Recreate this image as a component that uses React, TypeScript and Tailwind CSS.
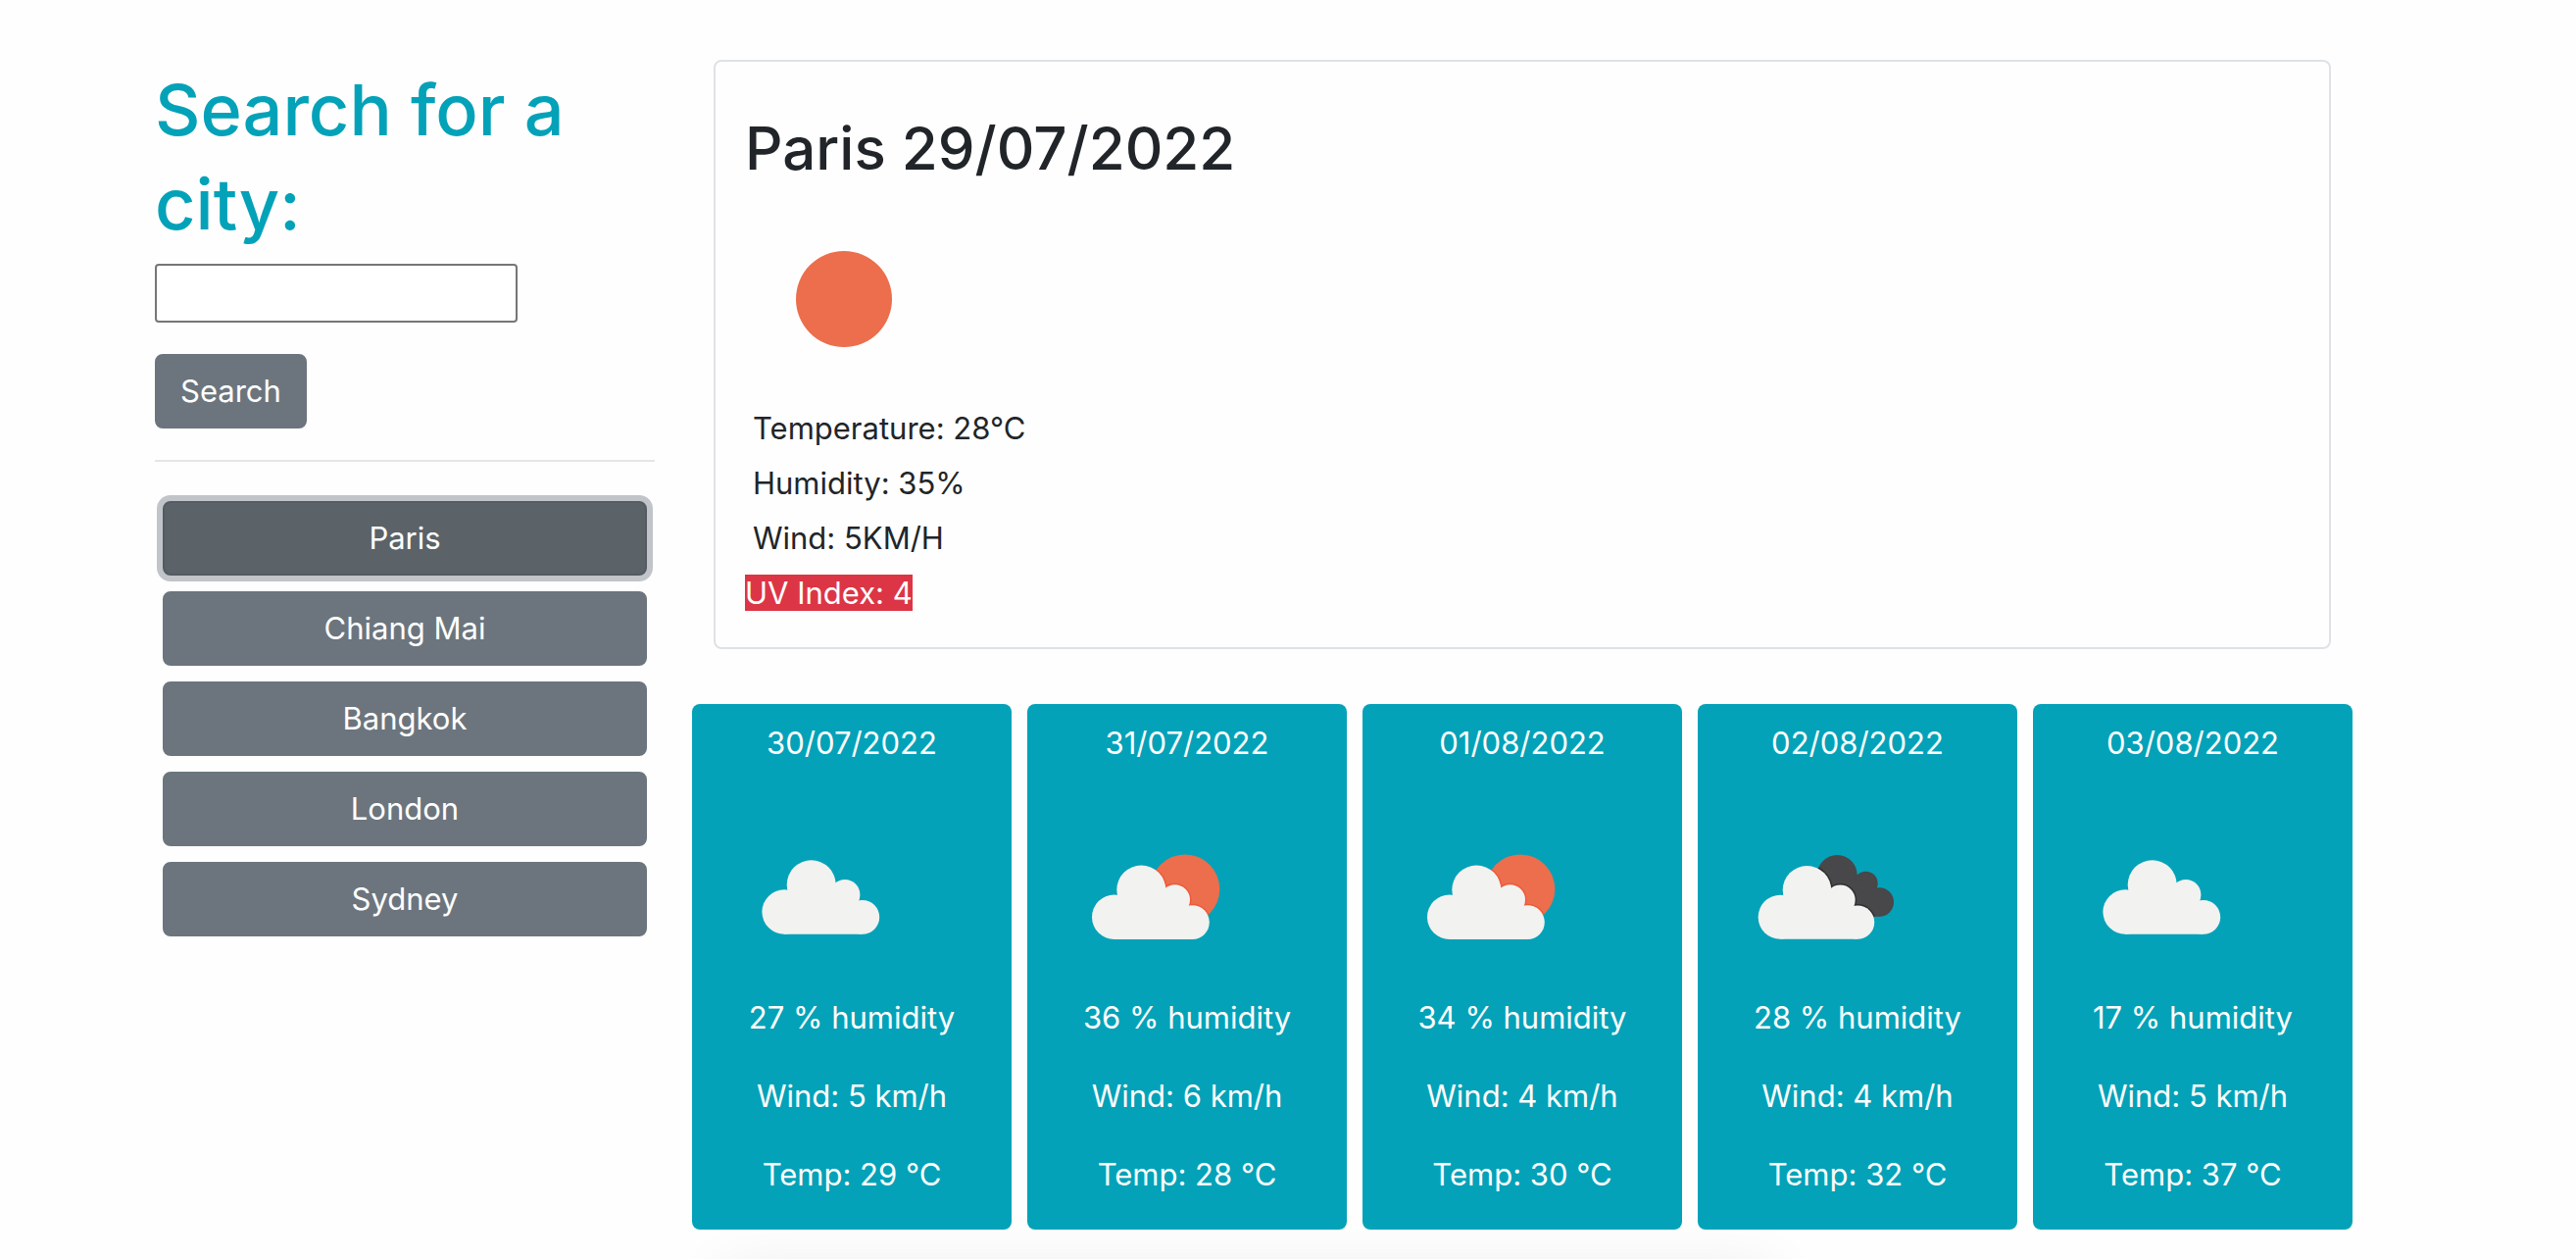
import { useState } from "react";
import type { ReactNode } from "react";

type Sky = "cloudy" | "partly" | "overcast";

const CITIES = ["Paris", "Chiang Mai", "Bangkok", "London", "Sydney"];

const FORECAST: { date: string; sky: Sky; humidity: number; wind: number; temp: number }[] = [
  { date: "30/07/2022", sky: "cloudy", humidity: 27, wind: 5, temp: 29 },
  { date: "31/07/2022", sky: "partly", humidity: 36, wind: 6, temp: 28 },
  { date: "01/08/2022", sky: "partly", humidity: 34, wind: 4, temp: 30 },
  { date: "02/08/2022", sky: "overcast", humidity: 28, wind: 4, temp: 32 },
  { date: "03/08/2022", sky: "cloudy", humidity: 17, wind: 5, temp: 37 },
];

const CURRENT = ["Temperature: 28°C", "Humidity: 35%", "Wind: 5KM/H"];

function CloudShape() {
  return (
    <>
      <circle cx="84.3" cy="125.5" r="25" />
      <circle cx="118.6" cy="135.6" r="15.4" />
      <circle cx="56.8" cy="153.2" r="22.8" />
      <circle cx="136.4" cy="158.6" r="17.4" />
      <path d="M56.8 176 L56.8 140 L84 125 L119 135 L136.4 158 L136.4 176 Z" />
    </>
  );
}

function DarkCloudShape() {
  return (
    <>
      <circle cx="110.3" cy="110.4" r="20.4" />
      <circle cx="139.4" cy="119" r="12.3" />
      <circle cx="153.3" cy="138" r="14.7" />
      <path d="M95 110 L139 118 L153.3 138 L153.3 152.7 L100 152.7 Z" />
    </>
  );
}

function SkyIcon({ sky }: { sky: Sky }) {
  return (
    <svg viewBox="0 0 200 200" className="block size-[200px]" aria-hidden="true">
      {sky === "cloudy" && (
        <g fill="#f2f2f0" transform="translate(5.4 -5.2)">
          <CloudShape />
        </g>
      )}
      {sky === "partly" && (
        <>
          <clipPath id="sun-disc">
            <circle cx="129" cy="124.7" r="35.3" />
          </clipPath>
          <circle cx="129" cy="124.7" r="35.3" fill="#ec6e4c" />
          <g clipPath="url(#sun-disc)" fill="#ee5a38" stroke="#ee5a38" strokeWidth="3">
            <CloudShape />
          </g>
          <g fill="#f2f2f0">
            <CloudShape />
          </g>
        </>
      )}
      {sky === "overcast" && (
        <>
          <clipPath id="dark-cloud">
            <DarkCloudShape />
          </clipPath>
          <g fill="#484749">
            <DarkCloudShape />
          </g>
          <g clipPath="url(#dark-cloud)">
            <g transform="translate(-4 1.6) scale(0.99)" fill="#2f2e30" stroke="#2f2e30" strokeWidth="3">
              <CloudShape />
            </g>
          </g>
          <g fill="#f2f2f0" transform="translate(-4 1.6) scale(0.99)">
            <CloudShape />
          </g>
        </>
      )}
    </svg>
  );
}

function CityButton({ active, onClick, children }: { active: boolean; onClick: () => void; children: ReactNode }) {
  return (
    <button
      type="button"
      onClick={onClick}
      className={
        active
          ? "w-full rounded-lg border-2 border-[#545b62] bg-[#5b6268] px-6 py-3 text-white ring-6 ring-[#c1c4c8]"
          : "w-full rounded-lg border-2 border-[#6c757d] bg-[#6c757d] px-6 py-3 text-white"
      }
    >
      {children}
    </button>
  );
}

export default function App() {
  const [city, setCity] = useState("Paris");

  return (
    <div className="min-h-screen overflow-hidden bg-[#fefefe] font-['Inter','Liberation_Sans',sans-serif] text-[31px] leading-[48px] text-[#212529]">
      <div className="grid grid-cols-4 pr-[220px] pl-32">
        <aside className="px-[30px] pt-16">
          <form onSubmit={(e) => e.preventDefault()}>
            <label htmlFor="city" className="block text-[72px] leading-24 font-medium text-[#04a2b8]">
              Search for a city:
            </label>
            <input
              id="city"
              type="text"
              className="mt-[13px] block h-[60px] w-[370px] max-w-full rounded-sm border-2 border-[#767676] bg-white px-1"
            />
            <button
              type="submit"
              className="mt-8 block rounded-lg border-2 border-[#6c757d] bg-[#6c757d] px-6 py-3 text-white"
            >
              Search
            </button>
          </form>
          <hr className="mt-8 border-t-2 border-[#e5e5e5]" />
          <ul className="mt-10 flex flex-col gap-4 px-2">
            {CITIES.map((name) => (
              <li key={name}>
                <CityButton active={name === city} onClick={() => setCity(name)}>
                  {name}
                </CityButton>
              </li>
            ))}
          </ul>
        </aside>

        <main className="col-span-3 pt-[61px]">
          <section className="mx-[30px] rounded-lg border-2 border-[#dee2e6] px-[30px] pt-[50px] pb-[31px]">
            <h1 className="text-[60px] leading-[76px] font-medium">Paris 29/07/2022</h1>
            <svg viewBox="0 0 200 200" className="mt-4 block size-[200px]" aria-hidden="true">
              <circle cx="101" cy="100" r="49" fill="#ec6e4c" />
            </svg>
            <div className="mt-2 flex flex-col items-start gap-2">
              {CURRENT.map((line) => (
                <p key={line} className="px-2">
                  {line}
                </p>
              ))}
              <p>
                <span className="bg-[#dc3545] text-white">UV Index: 4</span>
              </p>
            </div>
          </section>

          <section className="mx-2 mt-14 grid grid-cols-5 gap-4">
            {FORECAST.map((day) => (
              <article key={day.date} className="rounded-lg bg-[#04a2b8] px-8 pt-4 pb-8 text-center text-white">
                <h2>{day.date}</h2>
                <SkyIcon sky={day.sky} />
                <div className="mt-8 flex flex-col gap-8 whitespace-nowrap">
                  <p>{day.humidity} % humidity</p>
                  <p>Wind: {day.wind} km/h</p>
                  <p>Temp: {day.temp} °C</p>
                </div>
              </article>
            ))}
          </section>
          <div className="h-[30px] overflow-hidden">
            <div className="mt-10 mr-[600px] ml-10 h-20 rounded-lg shadow-[0_0_60px_rgba(0,0,0,0.08)]" />
          </div>
        </main>
      </div>
    </div>
  );
}
